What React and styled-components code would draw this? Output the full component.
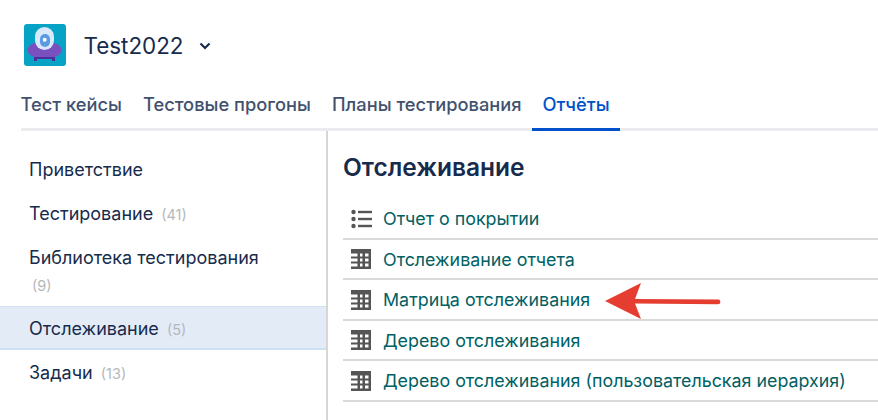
import React from 'react';
import styled, { createGlobalStyle } from 'styled-components';

const GlobalStyle = createGlobalStyle`
html, body {
  margin: 0;
  padding: 0;
  background: #fff;
  overflow: hidden;
}
body {
  font-family: Inter, "Noto Sans", sans-serif;
  color: #172b4d;
}
`;

const Page = styled.div`
position: relative;
width: 878px;
height: 420px;
overflow: hidden;
`;

const Header = styled.div`
display: flex;
align-items: center;
height: 42px;
padding: 24px 0 0 24px;
`;

const Logo = styled.div`
width: 42px;
height: 42px;
border-radius: 3px;
background: #06a3c4;
`;

const ProjectName = styled.div`
margin: 2px 0 0 17.5px;
font-size: 22.4px;
line-height: 42px;
color: #172b4d;
`;

const Caret = styled.svg`
width: 12px;
height: 8px;
margin: 2px 0 0 15px;
`;

const Tabs = styled.div`
display: flex;
margin: 17px 0 0 21px;
border-bottom: 3px solid #ebecf0;
height: 45px;
`;

const Tab = styled.div`
padding: 0 10.5px;
margin-left: ${(props) => (props.$first ? '-11px' : '0')};
font-size: 18.3px;
font-weight: 500;
line-height: 42px;
height: 48px;
box-sizing: border-box;
color: ${(props) => (props.$active ? '#0052cc' : '#42526e')};
border-bottom: 3px solid ${(props) => (props.$active ? '#0052cc' : 'transparent')};
`;

const Body = styled.div`
display: flex;
height: 289px;
`;

const Sidebar = styled.div`
width: 326px;
padding-top: 16px;
border-right: 2px solid #d6d6d6;
`;

const SideItem = styled.div`
padding: 9px 50px 8px 29px;
font-size: 18px;
line-height: 27px;
color: #172b4d;
background: ${(props) => (props.$active ? '#e3ebf7' : 'transparent')};
box-shadow: ${(props) => (props.$active ? 'inset 0 1px #cfe0f2, inset 0 -2px #cfe0f2' : 'none')};
`;

const Count = styled.span`
margin-left: 3px;
font-size: 14.5px;
line-height: 1;
color: #b5b8bd;
`;

const Main = styled.div`
flex: 1;
padding: 17px 0 0 15px;
`;

const Heading = styled.h1`
margin: 0 0 13px;
font-size: 24.5px;
font-weight: 600;
line-height: 38px;
color: #172b4d;
`;

const ReportRow = styled.div`
display: flex;
align-items: center;
height: 37.5px;
padding-top: 1px;
border-bottom: 2px solid #d9d9d9;
font-size: 17.85px;
color: #006064;
`;

const RowIcon = styled.svg`
width: 22px;
height: 20px;
margin: 0 10px 0 8px;
flex: none;
`;

const Arrow = styled.svg`
position: absolute;
left: 604px;
top: 282px;
width: 118px;
height: 38px;
`;

const AlienLogo = () => (
  <svg width="42" height="42" viewBox="0 0 42 42">
    <ellipse cx="20.500" cy="26" rx="17" ry="9" fill="#7a4fbe" />
    <rect x="11" y="3" width="19" height="23" rx="9.500" fill="#d9e8fb" />
    <rect x="16" y="10" width="10" height="13" rx="5" fill="#5a9be0" />
    <circle cx="20.700" cy="15.700" r="2" fill="#fff" />
    <rect x="11" y="33" width="19" height="2" fill="#4b2f9c" />
    <rect x="10" y="33" width="3" height="4" fill="#4b2f9c" />
    <rect x="28" y="33" width="3" height="4" fill="#4b2f9c" />
  </svg>
);

const ListIcon = () => (
  <RowIcon viewBox="0 0 22 20">
    <circle cx="2.500" cy="3" r="2.200" fill="#555" />
    <circle cx="2.500" cy="10" r="2.200" fill="#555" />
    <circle cx="2.500" cy="17" r="2.200" fill="#555" />
    <rect x="7" y="1.800" width="14" height="2.400" fill="#555" />
    <rect x="7" y="8.800" width="14" height="2.400" fill="#555" />
    <rect x="7" y="15.800" width="14" height="2.400" fill="#555" />
  </RowIcon>
);

const TableIcon = () => (
  <RowIcon viewBox="1 0 22 20">
    <path d="M1 0h20v20H1v-2.500h6.500v-3H1v-2h6.500v-3H1v-2h6.500v-3H1z M10 4.500v3h2.500v-3z M15 4.500v3h3.500v-3z M10 9.500v3h2.500v-3z M15 9.500v3h3.500v-3z M10 14.500v3h2.500v-3z M15 14.500v3h3.500v-3z" fill="#555" fillRule="evenodd" />
  </RowIcon>
);

const reports = [
  { title: 'Отчет о покрытии', icon: 'list' },
  { title: 'Отслеживание отчета', icon: 'table' },
  { title: 'Матрица отслеживания', icon: 'table' },
  { title: 'Дерево отслеживания', icon: 'table' },
  { title: 'Дерево отслеживания (пользовательская иерархия)', icon: 'table' },
];

const App = () => (
  <Page>
    <GlobalStyle />
    <Header>
      <Logo><AlienLogo /></Logo>
      <ProjectName>Test2022</ProjectName>
      <Caret viewBox="0 0 12 8">
        <path d="M1.500 1.500L6 6l4.500-4.500" fill="none" stroke="#172b4d" strokeWidth="2.200" />
      </Caret>
    </Header>
    <Tabs>
      <Tab $first>Тест кейсы</Tab>
      <Tab>Тестовые прогоны</Tab>
      <Tab>Планы тестирования</Tab>
      <Tab $active>Отчёты</Tab>
    </Tabs>
    <Body>
      <Sidebar>
        <SideItem>Приветствие</SideItem>
        <SideItem>Тестирование <Count>(41)</Count></SideItem>
        <SideItem>Библиотека тестирования <Count>(9)</Count></SideItem>
        <SideItem $active>Отслеживание <Count>(5)</Count></SideItem>
        <SideItem>Задачи <Count>(13)</Count></SideItem>
      </Sidebar>
      <Main>
        <Heading>Отслеживание</Heading>
        {reports.map((r) => (
          <ReportRow key={r.title}>
            {r.icon === 'list' ? <ListIcon /> : <TableIcon />}
            {r.title}
          </ReportRow>
        ))}
      </Main>
    </Body>
    <Arrow viewBox="0 0 118 38">
      <path d="M1 19L37 1L31 17L114 17.500a2.400 2.400 0 0 1 0 4.800L31 21.500L37 37z" fill="#e53e31" />
    </Arrow>
  </Page>
);

export default App;
